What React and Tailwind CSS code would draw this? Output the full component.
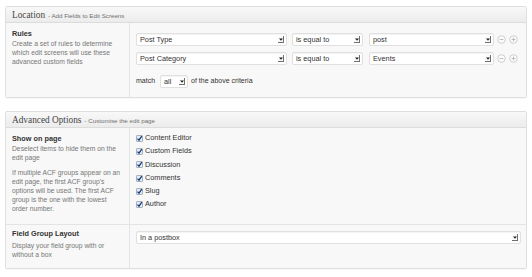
const sans = "font-['Liberation_Sans',Arial,sans-serif]";

const Arrow = () => (
  <span className="flex items-center justify-center w-[6px] h-[7px] bg-[#fafafa] border-r border-b border-[#6f6f6f] shrink-0">
    <svg width="4" height="3" viewBox="0 0 4 3">
      <path d="M0 0.5h4L2 2.8z" fill="#222" />
    </svg>
  </span>
);

const Select = ({ value, className = "" }) => (
  <div
    className={`flex items-center justify-between h-[13px] bg-white border border-[#e0e0e0] rounded-[2px] pl-[3px] pr-[2px] text-[7.3px] text-[#333] shadow-[inset_0_1px_1px_rgba(0,0,0,0.05)] ${className}`}
  >
    <span className="leading-none">{value}</span>
    <Arrow />
  </div>
);

const RoundIcon = ({ plus }) => (
  <svg width="9" height="9" viewBox="0 0 9 9" className="shrink-0">
    <circle cx="4.5" cy="4.5" r="3.8" fill="#fbfbfb" stroke="#c4c4c4" strokeWidth="0.8" />
    <path d="M2.6 4.5h3.8" stroke="#b0b0b0" strokeWidth="0.8" />
    {plus && <path d="M4.5 2.6v3.8" stroke="#b0b0b0" strokeWidth="0.8" />}
  </svg>
);

const Check = () => (
  <svg width="7" height="7" viewBox="0 0 7 7" className="shrink-0">
    <rect x="0.4" y="0.4" width="6.2" height="6.2" rx="1" fill="#e4ecf7" stroke="#7b8799" strokeWidth="0.7" />
    <path d="M1.5 3.6l1.5 1.6L5.8 1.2" fill="none" stroke="#173c7a" strokeWidth="1.3" />
  </svg>
);

const PanelHeader = ({ title, subtitle }) => (
  <div className="flex items-baseline h-[16px] pl-[6px] pt-[2px] bg-linear-to-b from-[#f8f8f8] to-[#ececec] border-b border-[#dcdcdc]">
    <span className="font-['Liberation_Serif',serif] text-[9.3px] text-[#464646]">{title}</span>
    <span className={`${sans} text-[6.2px] text-[#6f6f6f] ml-[3px]`}>{subtitle}</span>
  </div>
);

const Label = ({ title, children }) => (
  <div>
    <div className="text-[7.3px] font-bold text-[#333] leading-[9.5px]">{title}</div>
    <div className="mt-[0.5px] text-[6.75px] text-[#777] leading-[9.2px]">{children}</div>
  </div>
);

const options = ["Content Editor", "Custom Fields", "Discussion", "Comments", "Slug", "Author"];

export default function App() {
  return (
    <div className={`${sans} w-[532px] h-[277px] bg-white pt-[6px] px-[5px]`}>
      {/* Location */}
      <div className="border border-[#dfdfdf] rounded-[2px] shadow-[0_1px_1px_rgba(0,0,0,0.03)]">
        <PanelHeader title="Location" subtitle="- Add Fields to Edit Screens" />
        <div className="flex h-[74px] bg-[#f8f8f8]">
          <div className="w-[124px] shrink-0 pl-[6px] pt-[6px] border-r border-[#e4e4e4]">
            <Label title="Rules">
              Create a set of rules to determine
              <br />
              which edit screens will use these
              <br />
              advanced custom fields
            </Label>
          </div>
          <div className="flex-1 pl-[6px] pr-[8px] pt-[10px]">
            <div className="flex items-center">
              <Select value="Post Type" className="w-[151px]" />
              <Select value="is equal to" className="w-[71px] ml-[5px]" />
              <Select value="post" className="flex-1 ml-[6px]" />
              <div className="flex gap-[3px] ml-[3px]">
                <RoundIcon />
                <RoundIcon plus />
              </div>
            </div>
            <div className="flex items-center mt-[6px]">
              <Select value="Post Category" className="w-[151px]" />
              <Select value="is equal to" className="w-[71px] ml-[5px]" />
              <Select value="Events" className="flex-1 ml-[6px]" />
              <div className="flex gap-[3px] ml-[3px]">
                <RoundIcon />
                <RoundIcon plus />
              </div>
            </div>
            <div className="flex items-center mt-[10px] text-[7px] text-[#333]">
              <span>match</span>
              <Select value="all" className="w-[28px] h-[12px] ml-[5px]" />
              <span className="ml-[3px]">of the above criteria</span>
            </div>
          </div>
        </div>
      </div>

      {/* Advanced Options */}
      <div className="mt-[13px] border border-[#dfdfdf] rounded-[2px] shadow-[0_1px_1px_rgba(0,0,0,0.03)]">
        <PanelHeader title="Advanced Options" subtitle="- Customise the edit page" />
        <div className="bg-[#f8f8f8]">
          <div className="flex h-[97px] border-b border-[#e4e4e4]">
            <div className="w-[124px] shrink-0 pl-[6px] pt-[6px] border-r border-[#e4e4e4]">
              <Label title="Show on page">
                Deselect items to hide them on the
                <br />
                edit page
              </Label>
              <p className="mt-[7px] text-[6.75px] text-[#777] leading-[8.8px]">
                If multiple ACF groups appear on an
                <br />
                edit page, the first ACF group's
                <br />
                options will be used. The first ACF
                <br />
                group is the one with the lowest
                <br />
                order number.
              </p>
            </div>
            <div className="flex-1 pl-[6px] pt-[4px]">
              {options.map((o) => (
                <div key={o} className="flex items-center h-[13.2px]">
                  <Check />
                  <span className="ml-[2px] text-[7.3px] text-[#333]">{o}</span>
                </div>
              ))}
            </div>
          </div>
          <div className="flex h-[43px]">
            <div className="w-[124px] shrink-0 pl-[6px] pt-[4px] border-r border-[#e4e4e4]">
              <Label title="Field Group Layout">
                <span className="block mt-[2px]">
                  Display your field group with or
                  <br />
                  without a box
                </span>
              </Label>
            </div>
            <div className="flex-1 pl-[6px] pr-[5px] pt-[6px]">
              <Select value="In a postbox" className="w-full" />
            </div>
          </div>
        </div>
      </div>
    </div>
  );
}
